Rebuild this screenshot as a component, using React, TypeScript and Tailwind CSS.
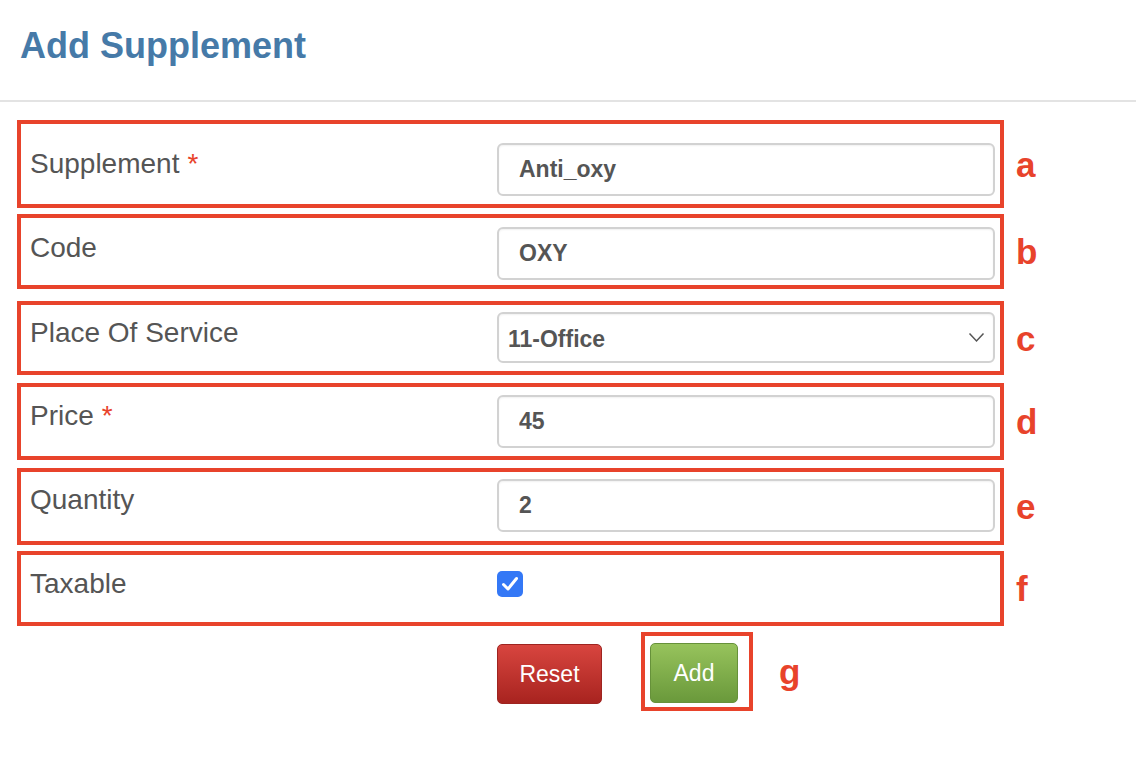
const font = "font-[family-name:Liberation_Sans,Arial,Helvetica,sans-serif]";

type Row = {
  label: string;
  letter: string;
  required?: boolean;
  kind: "input" | "select" | "check";
  value?: string;
  gap: string;
  pad: string;
};

const rows: Row[] = [
  { label: "Supplement", letter: "a", required: true, kind: "input", value: "Anti_oxy", gap: "mt-[18px]", pad: "pt-[19px] pb-[8px]" },
  { label: "Code", letter: "b", kind: "input", value: "OXY", gap: "mt-[6px]", pad: "pt-[9px] pb-[5px]" },
  { label: "Place Of Service", letter: "c", kind: "select", value: "11-Office", gap: "mt-[12px]", pad: "pt-[7px] pb-[8px]" },
  { label: "Price", letter: "d", required: true, kind: "input", value: "45", gap: "mt-[8px]", pad: "pt-[8px] pb-[8px]" },
  { label: "Quantity", letter: "e", kind: "input", value: "2", gap: "mt-[8px]", pad: "pt-[7px] pb-[9px]" },
  { label: "Taxable", letter: "f", kind: "check", gap: "mt-[6px]", pad: "pt-[8px] pb-[18px]" },
];

function Field({ row }: { row: Row }) {
  if (row.kind === "check") {
    return (
      <div className="mt-[8px] w-[26px] h-[26px] rounded-[5px] bg-[#3478f6] flex items-center justify-center">
        <svg width="18" height="16" viewBox="0 0 18 16" fill="none">
          <path d="M2.5 8.5 L7 13 L15.5 2.5" stroke="white" strokeWidth="3" strokeLinecap="round" strokeLinejoin="round" />
        </svg>
      </div>
    );
  }
  if (row.kind === "select") {
    return (
      <div className="h-[51px] w-full rounded-[6px] border-2 border-[#d2d2d2] bg-white flex items-center pl-[9px] pr-[8px] shadow-[inset_0_1px_2px_rgba(0,0,0,0.06)]">
        <span className="flex-1 mt-[4px] text-[23px] font-bold text-[#555]">{row.value}</span>
        <svg width="17" height="11" viewBox="0 0 17 11" fill="none">
          <polyline points="1.5,1.5 8.5,9 15.5,1.5" stroke="#555" strokeWidth="1.5" />
        </svg>
      </div>
    );
  }
  return (
    <input
      defaultValue={row.value}
      className={`${font} h-[53px] w-full rounded-[6px] border-2 border-[#d2d2d2] bg-white pl-[20px] text-[23px] font-bold text-[#555] outline-none shadow-[inset_0_1px_2px_rgba(0,0,0,0.06)]`}
    />
  );
}

export default function App() {
  return (
    <div className={`${font} bg-white w-[1136px] h-[760px] overflow-hidden`}>
      <div className="h-[102px] border-b-2 border-[#e3e3e3] pt-[26px] pl-[20px]">
        <h1 className="text-[36px] leading-[40px] font-bold text-[#467aa8]">Add Supplement</h1>
      </div>

      <div className="pl-[17px]">
        {rows.map((row) => (
          <div key={row.letter} className={`flex items-center ${row.gap}`}>
            <div className={`w-[987px] border-4 border-[#e8432b] flex items-start pl-[9px] pr-[5px] ${row.pad}`}>
              <div className="w-[467px] shrink-0 text-[28px] leading-[41px] text-[#555]">
                {row.label}
                {row.required && <span className="text-[#e8432b] ml-[8px]">*</span>}
              </div>
              <div className="flex-1">
                <Field row={row} />
              </div>
            </div>
            <span className="ml-[12px] text-[35px] font-bold text-[#e8432b] leading-none">{row.letter}</span>
          </div>
        ))}

        <div className="mt-[6px] ml-[480px] flex items-center">
          <button className={`${font} mt-[5px] w-[105px] h-[60px] rounded-[5px] border border-[#9e2420] bg-gradient-to-b from-[#d8453f] to-[#a8231f] text-white text-[23px]`}>
            Reset
          </button>
          <div className="ml-[39px] w-[112px] h-[79px] border-4 border-[#e8432b] pt-[7px] pl-[5px]">
            <button className={`${font} w-[88px] h-[60px] rounded-[5px] border border-[#66913a] bg-gradient-to-b from-[#97c35c] to-[#6a993b] text-white text-[23px]`}>
              Add
            </button>
          </div>
          <span className="ml-[26px] text-[35px] font-bold text-[#e8432b] leading-none">g</span>
        </div>
      </div>
    </div>
  );
}
